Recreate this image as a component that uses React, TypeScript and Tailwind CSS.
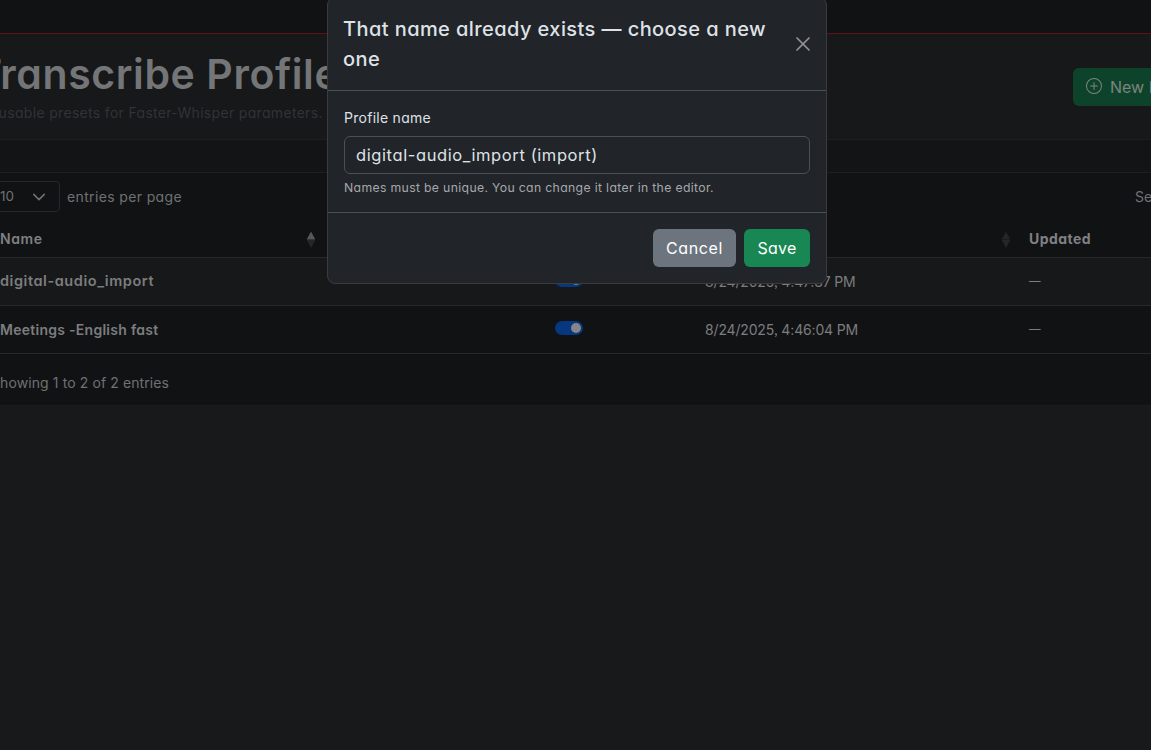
import { X } from "lucide-react";

const rows = [
  { name: "digital-audio_import", style: "text-[14.5px] tracking-[0.56px]", created: "8/24/2025, 4:47:37 PM", bg: "bg-[#17181a]" },
  { name: "Meetings -English fast", style: "text-sm tracking-[0.27px]", created: "8/24/2025, 4:46:04 PM", bg: "bg-[#111214]" },
];

const columns = "grid grid-cols-[555px_150px_324px_1fr] items-center";

function SortIcon({ up, down }: { up: string; down: string }) {
  return (
    <svg width="10" height="18" viewBox="0 0 10 18" className="mt-0.5 shrink-0">
      <path d="M5 0.5 L9.3 8.5 H0.7 Z" fill={up} />
      <path d="M5 17 L9.3 9 H0.7 Z" fill={down} />
    </svg>
  );
}

function Toggle() {
  return (
    <span className="flex h-3.5 w-7 items-center justify-end rounded-full bg-[#06377f] pr-[2px]">
      <span className="size-2.5 rounded-full bg-[#868686]" />
    </span>
  );
}

function Page() {
  return (
    <div className="flex h-full flex-col text-sm text-[#6f7173]">
      <nav className="h-[34px] shrink-0 border-b border-[#651216] bg-[#111214]" />
      <header className="flex h-[106px] shrink-0 justify-between border-b border-[#1d1e20] bg-[#17181a]">
        <div className="whitespace-nowrap">
          <h1 className="-ml-[25px] mt-4 text-[41px] leading-[48px] font-semibold tracking-[0.6px] text-[#747577]">
            Transcribe Profiles
          </h1>
          <p className="-ml-[19px] mt-1 leading-[21px] tracking-[0.32px] text-[#303337]">
            Reusable presets for Faster-Whisper parameters.
          </p>
        </div>
        <button className="mt-[34px] flex h-[38px] w-[78px] items-center gap-2 overflow-hidden rounded-l-md bg-[#0d432a] pl-[13px] text-base whitespace-nowrap text-[#7d8480]">
          <svg width="16" height="16" viewBox="0 0 16 16" fill="currentColor" className="-mt-0.5 shrink-0">
            <path d="M8 15A7 7 0 1 1 8 1a7 7 0 0 1 0 14m0 1A8 8 0 1 0 8 0a8 8 0 0 0 0 16" />
            <path d="M8 4a.5.5 0 0 1 .5.5v3h3a.5.5 0 0 1 0 1h-3v3a.5.5 0 0 1-1 0v-3h-3a.5.5 0 0 1 0-1h3v-3A.5.5 0 0 1 8 4" />
          </svg>
          New Profile
        </button>
      </header>
      <div className="h-[33px] shrink-0 border-b border-[#1e1f21] bg-[#131416]" />
      <main className="flex h-[232px] shrink-0 flex-col bg-[#111214]">
        <div className="flex h-12 items-center justify-between">
          <div className="flex items-center gap-[7px]">
            <span className="-mt-px -ml-3 flex h-[31px] w-[72px] items-center justify-between rounded-[4px] border border-[#26292c] pr-[13px] pl-[11px] text-[13.5px]">
              10
              <svg width="14" height="14" viewBox="0 0 16 16" fill="none" stroke="currentColor" strokeWidth="1.8" strokeLinecap="round" strokeLinejoin="round">
                <path d="m2 5 6 6 6-6" />
              </svg>
            </span>
            <span className="tracking-[0.36px]">entries per page</span>
          </div>
          <span className="w-4 overflow-hidden whitespace-nowrap">Search:</span>
        </div>
        <div className={`${columns} h-[37px] border-b border-[#28292b] font-semibold text-[#7f8082]`}>
          <div className="flex w-[316px] items-center justify-between">
            <span className="tracking-[0.6px]">Name</span>
            <SortIcon up="#57585a" down="#252628" />
          </div>
          <span />
          <div className="flex justify-end pr-[18px]">
            <SortIcon up="#252628" down="#252628" />
          </div>
          <span className="font-bold tracking-[0.44px]">Updated</span>
        </div>
        {rows.map((r) => (
          <div key={r.name} className={`${columns} h-12 shrink-0 border-b border-[#28292b] text-[#7c7d7e] ${r.bg}`}>
            <span className={`font-semibold ${r.style}`}>{r.name}</span>
            <div className="pb-[3px]">
              <Toggle />
            </div>
            <span className="tracking-[-0.16px]">{r.created}</span>
            <span className="text-[11.5px]">—</span>
          </div>
        ))}
        <p className="mt-[18px] -ml-[9px] leading-[21px] tracking-[0.1px]">Showing 1 to 2 of 2 entries</p>
      </main>
      <div className="h-px shrink-0 bg-[#1b1c1e]" />
    </div>
  );
}

function Modal() {
  return (
    <div role="dialog" className="-mt-[3px] ml-[327px] flex w-[500px] flex-col rounded-lg border border-[#3a3b3d] bg-[#212429] text-[#dee2e6]">
      <div className="flex items-center justify-between border-b border-[#495057] p-4">
        <h2 className="-ml-px w-[430px] text-xl leading-[30px] font-medium tracking-[0.42px]">
          That name already exists — choose a new one
        </h2>
        <X size={24} strokeWidth={1.7} className="-mt-px -mr-[5px] text-[#909294]" />
      </div>
      <div className="flex flex-col border-b border-[#495057] px-4 pt-4 pb-[15px]">
        <label className="mb-2 text-sm leading-[21px] tracking-[0.27px]">Profile name</label>
        <div className="flex h-[38px] items-center rounded-md border border-[#495057] px-[11px] text-[16.5px] tracking-[0.6px]">
          digital-audio_import (import)
        </div>
        <p className="mt-1 text-[12.25px] leading-[19px] tracking-[0.33px] text-[#a5a8ac]">
          Names must be unique. You can change it later in the editor.
        </p>
      </div>
      <div className="flex justify-end gap-2 p-4 text-base text-white">
        <button className="h-[38px] w-[83px] rounded-md bg-[#6c757d] tracking-[0.6px]">Cancel</button>
        <button className="h-[38px] w-[66px] rounded-md bg-[#198754] tracking-[0.23px]">Save</button>
      </div>
    </div>
  );
}

export default function App() {
  return (
    <div className="relative h-[750px] w-full overflow-hidden bg-[#17191a] font-['Inter',sans-serif] [font-feature-settings:'cv11','ss03']">
      <Page />
      <div className="absolute inset-0">
        <Modal />
      </div>
    </div>
  );
}
